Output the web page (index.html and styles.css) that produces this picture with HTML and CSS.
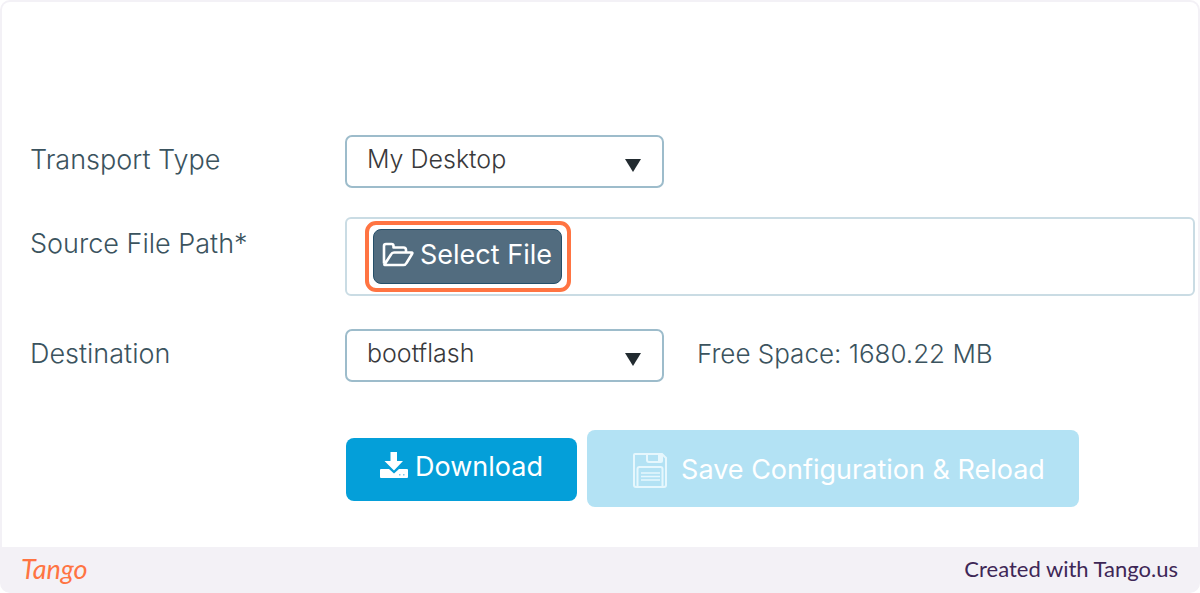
FILE: index.html
```html
<!DOCTYPE html>
<html lang="en">
<head>
<meta charset="utf-8">
<title>Software download</title>
<link rel="stylesheet" href="styles.css">
</head>
<body>
<div class="frame">
  <main class="panel">
    <form class="form">
      <div class="row">
        <label class="label" for="transport">Transport Type</label>
        <div class="select">
          <select id="transport"><option>My Desktop</option></select>
          <svg class="arrow" viewBox="0 0 16 13" aria-hidden="true"><path d="M0 0h16L8 13z" fill="#222b30"/></svg>
        </div>
      </div>
      <div class="row row-file">
        <label class="label" for="file">Source File Path*</label>
        <div class="file-box">
          <div class="highlight">
            <button class="select-file" id="file" type="button">
              <svg class="folder" viewBox="0 0 32 26" fill="none" stroke="#fff" stroke-width="2.6" stroke-linejoin="round" aria-hidden="true"><path d="M2 21.500V4Q2 2 4 2h5.500Q11.500 2 11.500 4v1.500h10Q24 5.500 24 8v2.500M2.500 22.500 9 12.500Q10 10.500 12 10.500h17.500q1.500 0 .5 1.500L24.500 21Q23.500 23 21.500 23H3.500Q2 23 2.500 22.500z"/></svg>
              <span>Select File</span>
            </button>
          </div>
        </div>
      </div>
      <div class="row">
        <label class="label" for="destination">Destination</label>
        <div class="select">
          <select id="destination"><option>bootflash</option></select>
          <svg class="arrow" viewBox="0 0 16 13" aria-hidden="true"><path d="M0 0h16L8 13z" fill="#222b30"/></svg>
        </div>
        <span class="free">Free Space: 1680.22 MB</span>
      </div>
      <div class="actions">
        <button class="download" type="button">
          <svg class="download-icon" viewBox="0 0 28 26" aria-hidden="true"><path fill="#fff" d="M10.500 0h6.500v9h6L14 18.500 4.500 9h6zM1 17h8l5 4.500 5-4.500h8q1 0 1 1v7q0 1-1 1H1q-1 0-1-1v-7q0-1 1-1z"/><path fill="#7cc9ea" d="M19 22h1.500v1.500H19zm4 0h1.500v1.500H23z"/></svg>
          <span>Download</span>
        </button>
        <button class="save" type="button" disabled>
          <svg class="save-icon" viewBox="0 0 34 35" fill="none" stroke="#e6f7fd" stroke-width="2" aria-hidden="true"><path d="M2 1h27l4 4v27q0 2-2 2H3q-2 0-2-2V2q0-1 1-1zM14 1v6q0 2 2 2h12q1 0 1-1V1M4.500 34V16q0-2 2-2h21q2 0 2 2v18"/><path d="M26.500 2v6" stroke-width="3"/><path d="M8 20h19M8 23.500h19M8 27h19" stroke-width="1.500"/></svg>
          <span>Save Configuration &amp; Reload</span>
        </button>
      </div>
    </form>
  </main>
  <footer class="footer">
    <a class="brand" href="#">Tango</a>
    <span class="credit">Created with Tango.us</span>
  </footer>
</div>
</body>
</html>
```
FILE: styles.css
```css
* { box-sizing: border-box; }
body {
  margin: 0;
  background: #fff;
  color: #3b535e;
  font: 300 27px/32px Inter, "Liberation Sans", sans-serif;
}
button, select { font: inherit; }
.frame {
  display: flex;
  flex-direction: column;
  min-height: 100vh;
  padding: 2px;
  padding-bottom: 0;
  background: #f3f1f6;
  border-radius: 10px;
}
.panel {
  flex: 1;
  padding: 133px 3px 39px 28px;
  background: #fff;
  border-radius: 8px 8px 0 0;
}
.form { display: flex; flex-direction: column; }
.row {
  display: flex;
  align-items: center;
  margin-bottom: 29px;
}
.row-file { align-items: flex-start; margin-bottom: 33px; }
.row-file .label { margin-top: 11px; }
.label { flex: 0 0 315px; padding-bottom: 3px; }
.select { position: relative; flex: 0 0 319px; }
.select select {
  display: block;
  width: 100%;
  height: 53px;
  padding: 0 48px 5px 20px;
  appearance: none;
  background: #fff;
  border: 2px solid #9dbccb;
  border-radius: 7px;
  color: #39393b;
  font-size: 25px;
}
.arrow {
  position: absolute;
  right: 23px;
  top: 24px;
  width: 16px;
  height: 13px;
  pointer-events: none;
}
.file-box {
  flex: 1;
  display: flex;
  padding: 2px 18px;
  border: 2px solid #cadce4;
  border-radius: 6px;
}
.highlight {
  padding: 4px 5px 4px 4px;
  border: 4px solid #ff7442;
  border-radius: 11px;
}
.select-file {
  display: flex;
  align-items: center;
  gap: 6px;
  height: 55px;
  padding: 0 9px 4px 8px;
  border: 1px solid #254f69;
  border-radius: 8px;
  background: #526c7f;
  color: #fff;
  font-weight: 400;
}
.folder { width: 32px; height: 26px; }
.free { margin-left: 33px; padding-bottom: 4px; font-size: 26px; }
.actions {
  display: flex;
  align-items: center;
  gap: 10px;
  margin: 19px 0 0 316px;
}
.download, .save {
  display: flex;
  align-items: center;
  justify-content: center;
  border: 0;
  border-radius: 8px;
  color: #fff;
  font-weight: 400;
}
.download {
  gap: 7px;
  width: 231px;
  height: 63px;
  margin-top: 2px;
  padding: 0 0 6px;
  background: #049fd9;
}
.download-icon { width: 28px; height: 26px; margin-bottom: 4px; }
.save {
  gap: 14px;
  width: 492px;
  height: 77px;
  padding: 3px 0 0 12px;
  background: #b3e2f4;
}
.save-icon { width: 34px; height: 35px; }
.footer {
  display: flex;
  align-items: center;
  justify-content: space-between;
  height: 46px;
  padding: 0 20px 2px 19px;
}
.brand {
  color: #ff7442;
  font: italic 400 27px/32px Lato, sans-serif;
  text-decoration: none;
}
.credit {
  color: #3e2756;
  font: 400 22px/24px Lato, sans-serif;
}
```
